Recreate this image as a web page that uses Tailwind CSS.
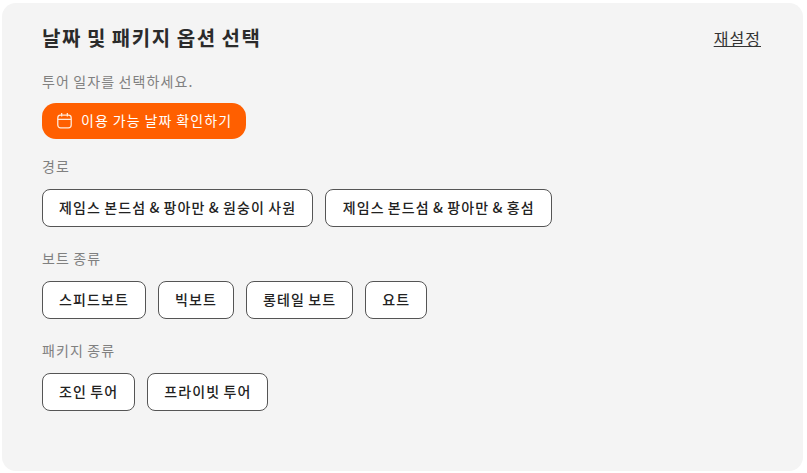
<!DOCTYPE html>
<html lang="ko"><head><meta charset="utf-8"><script src="https://cdn.jsdelivr.net/npm/@tailwindcss/browser@4"></script></head>
<body class="bg-white font-['Noto_Sans_CJK_KR','Noto_Sans',sans-serif] w-[807px] h-[473px] overflow-hidden">
<div class="mx-[2px] mt-[3px] w-[801px] h-[468px] bg-[#f4f4f4] rounded-[14px] pl-[40px] pr-[42px] pt-[20px]">
<div class="flex justify-between items-center h-[30px]"><h2 class="text-[20px] tracking-[1.6px] [word-spacing:-2.3px] font-bold text-[#2b2b2b]">날짜 및 패키지 옵션 선택</h2><a class="text-[16px] tracking-[1.05px] font-normal underline text-[#333]">재설정</a></div>
<p class="mt-[18px] text-[14px] tracking-[1.12px] [word-spacing:-1.85px] leading-[20px] text-[#808080]">투어 일자를 선택하세요.</p>
<button class="mt-[12px] h-[36px] w-[204px] rounded-[14px] bg-[#ff5f00] text-white text-[14px] tracking-[1.12px] [word-spacing:-1.3px] font-normal flex items-center pl-[14px] gap-[8px] pb-[1px]"><svg width="17" height="17" viewBox="0 0 24 24" fill="none" stroke="#ffe9d9" stroke-width="1.8"><rect x="2.5" y="4.5" width="19" height="18" rx="4"/><path d="M2.5 10.5h19M8 1.5v5M16 1.5v5"/></svg>이용 가능 날짜 확인하기</button>
<p class="mt-[17px] text-[14px] tracking-[1.12px] [word-spacing:-1.85px] leading-[20px] text-[#808080]">경로</p>
<div class="mt-[13px] flex gap-[12px]"><button class="h-[38px] px-[16px] pb-[2px] border border-[#555] rounded-lg bg-white text-[14px] tracking-[1.12px] [word-spacing:-1.85px] font-medium text-[#222]">제임스 본드섬 &amp; 팡아만 &amp; 원숭이 사원</button><button class="h-[38px] w-[227px] pb-[2px] border border-[#555] rounded-lg bg-white text-[14px] tracking-[1.12px] [word-spacing:-1.85px] font-medium text-[#222]">제임스 본드섬 &amp; 팡아만 &amp; 홍섬</button></div>
<p class="mt-[21px] text-[14px] tracking-[1.12px] [word-spacing:-1.85px] leading-[20px] text-[#808080]">보트 종류</p>
<div class="mt-[13px] flex gap-[12px]"><button class="h-[38px] px-[16px] pb-[2px] border border-[#555] rounded-lg bg-white text-[14px] tracking-[1.12px] [word-spacing:-1.85px] font-medium text-[#222]">스피드보트</button><button class="h-[38px] px-[16px] pb-[2px] border border-[#555] rounded-lg bg-white text-[14px] tracking-[1.12px] [word-spacing:-1.85px] font-medium text-[#222]">빅보트</button><button class="h-[38px] px-[16px] pb-[2px] border border-[#555] rounded-lg bg-white text-[14px] tracking-[1.12px] [word-spacing:-1.85px] font-medium text-[#222]">롱테일 보트</button><button class="h-[38px] px-[16px] pb-[2px] border border-[#555] rounded-lg bg-white text-[14px] tracking-[1.12px] [word-spacing:-1.85px] font-medium text-[#222]">요트</button></div>
<p class="mt-[21px] text-[14px] tracking-[1.12px] [word-spacing:-1.85px] leading-[20px] text-[#808080]">패키지 종류</p>
<div class="mt-[13px] flex gap-[12px]"><button class="h-[38px] px-[16px] pb-[2px] border border-[#555] rounded-lg bg-white text-[14px] tracking-[1.12px] [word-spacing:-1.85px] font-medium text-[#222]">조인 투어</button><button class="h-[38px] px-[16px] pb-[2px] border border-[#555] rounded-lg bg-white text-[14px] tracking-[1.12px] [word-spacing:-1.85px] font-medium text-[#222]">프라이빗 투어</button></div>
</div></body></html>
